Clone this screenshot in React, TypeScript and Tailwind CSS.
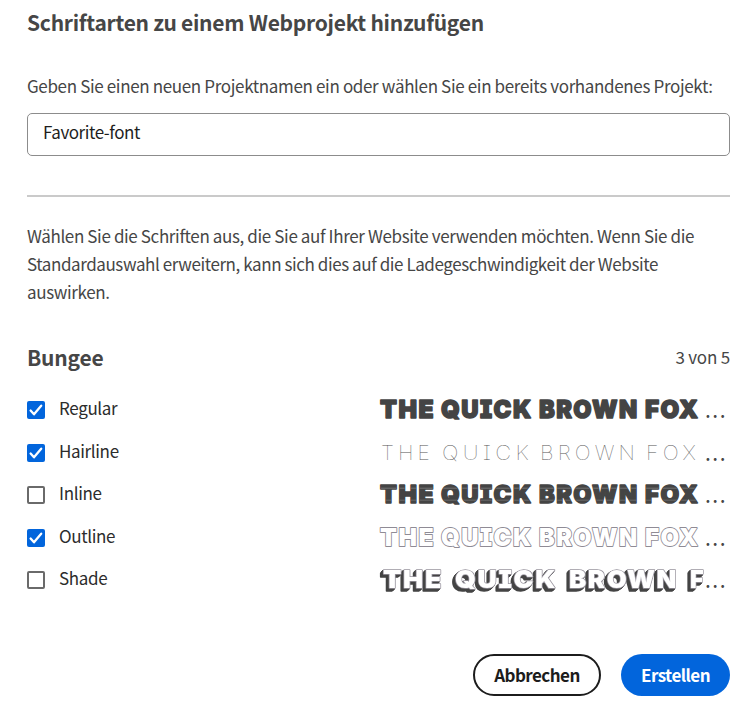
import React from "react";

type Word = [text: string, x: number, width: number];

const wide: Word[] = [["THE", 1, 55], ["QUICK", 62, 91.5], ["BROWN", 160, 99.5], ["FOX", 266, 54.5]];
const thin: Word[] = [["THE", 2, 53], ["QUICK", 63, 91], ["BROWN", 161, 99], ["FOX", 267, 54]];
const shaded: Word[] = [["THE", 4, 60], ["QUICK", 76, 102], ["BROWN", 190, 109], ["F", 311, 15]];

const heavy =
  "font-['Inter'] font-black text-[25px] tracking-[1.5px] [font-feature-settings:'cv08'] [paint-order:stroke] [stroke-linejoin:round]";

const styles = {
  regular: heavy + " fill-[#444] stroke-[#444] stroke-[1.4px]",
  hairline: "font-['Inter'] font-thin text-[20.5px] tracking-[4px] [font-feature-settings:'cv08'] fill-[#555]",
  inline: heavy + " stroke-[#444] stroke-[1.4px]",
  outline: heavy + " fill-white stroke-[#8f8b95] stroke-[1.8px]",
  shade:
    heavy +
    " fill-white stroke-[#99959f] stroke-[1.5px] [filter:drop-shadow(-1px_1px_0_#444)_drop-shadow(-1px_1px_0_#444)_drop-shadow(-1px_1px_0_#444)]",
};

const fonts: { label: string; style: keyof typeof styles; on: boolean; words: Word[] }[] = [
  { label: "Regular", style: "regular", on: true, words: wide },
  { label: "Hairline", style: "hairline", on: true, words: thin },
  { label: "Inline", style: "inline", on: false, words: wide },
  { label: "Outline", style: "outline", on: true, words: wide },
  { label: "Shade", style: "shade", on: false, words: shaded },
];

const baseline = { regular: 29, hairline: 27.5, inline: 29, outline: 28.5, shade: 28.5 };

function Specimen({ style, words }: { style: keyof typeof styles; words: Word[] }) {
  return (
    <svg width="328" height="36" className="block shrink-0">
      {/* Light stripes near the top and bottom of the inline capitals */}
      <linearGradient id="engraved" gradientUnits="userSpaceOnUse" x1="0" y1="10" x2="0" y2="30">
        <stop offset="0.17" stopColor="#444" />
        <stop offset="0.2" stopColor="#999" />
        <stop offset="0.24" stopColor="#444" />
        <stop offset="0.77" stopColor="#444" />
        <stop offset="0.8" stopColor="#888" />
        <stop offset="0.84" stopColor="#444" />
      </linearGradient>
      <g className={styles[style]} fill={style === "inline" ? "url(#engraved)" : undefined}>
        {words.map(([t, x, w]) => (
          <text key={t} x={x} y={baseline[style]} textLength={w} lengthAdjust="spacingAndGlyphs">{t}</text>
        ))}
      </g>
    </svg>
  );
}

function Checkbox({ on }: { on: boolean }) {
  return on ? (
    <span className="mt-[4px] flex size-[18px] items-center justify-center rounded-[2px] bg-[#0265dc]">
      <svg width="18" height="18" viewBox="0 0 18 18" fill="none" stroke="#fff" strokeWidth="2.3" strokeLinecap="round" strokeLinejoin="round">
        <path d="M3.6 9.5 7 13.3 14.2 4.7" />
      </svg>
    </span>
  ) : (
    <span className="mt-[4px] size-[18px] rounded-[2px] border-2 border-[#6a6a6a] bg-white" />
  );
}

export default function App() {
  return (
    <main className="h-[707px] w-[755px] overflow-hidden bg-white pl-[27px] pr-[25px] font-['Noto_Sans_CJK_SC',sans-serif] text-[17px] tracking-[-0.35px] text-[#464646]">
      <h1 className="h-[73px] whitespace-nowrap pt-[8px] text-[21px] font-bold leading-[28px] tracking-[-0.27px]">Schriftarten zu einem Webprojekt hinzufügen</h1>
      <label className="block h-[40px] whitespace-nowrap leading-[26px]">
        Geben Sie einen neuen Projektnamen ein oder wählen Sie ein bereits vorhandenes Projekt:
      </label>
      <div className="h-[43px] rounded-[5px] border border-[#8c8c8c] pl-[15px] pt-[5px] leading-[26px] tracking-[-0.45px] text-[#1e1e1e]">Favorite-font</div>
      <hr className="mt-[39px] border-t-2 border-[#cacaca]" />
      <p className="mt-[25px] whitespace-nowrap leading-[28px] tracking-[-0.37px]">
        Wählen Sie die Schriften aus, die Sie auf Ihrer Website verwenden möchten. Wenn Sie die<br />
        <span className="tracking-[-0.42px]">Standardauswahl erweitern, kann sich dies auf die Ladegeschwindigkeit der Website</span><br />
        auswirken.
      </p>
      <div className="mt-[37px] flex h-[46px] justify-between">
        <h2 className="text-[21px] font-bold leading-[28px] tracking-[-0.2px]">Bungee</h2>
        <span className="leading-[27px] tracking-[-0.2px]">3 von 5</span>
      </div>
      <ul>
        {fonts.map((f) => (
          <li key={f.label} className="flex h-[42.5px]">
            <div className="flex w-[352px] gap-[14px] pt-[8px] text-[#2c2c2c]">
              <Checkbox on={f.on} />
              <span className="leading-[22px]">{f.label}</span>
            </div>
            <div className="flex">
              <Specimen style={f.style} words={f.words} />
              <span className="-ml-[2px] pt-[9px] text-[21px] leading-[22px] tracking-[1.5px]">...</span>
            </div>
          </li>
        ))}
      </ul>
      <div className="mt-[52px] flex justify-end gap-[20px] text-[17px] font-bold leading-[38px] tracking-[-0.55px]">
        <button className="h-[42px] w-[128px] rounded-full border-2 border-[#1c1c1c] text-[#1c1c1c]">Abbrechen</button>
        <button className="h-[42px] w-[109px] rounded-full bg-[#0265dc] text-white">Erstellen</button>
      </div>
    </main>
  );
}
